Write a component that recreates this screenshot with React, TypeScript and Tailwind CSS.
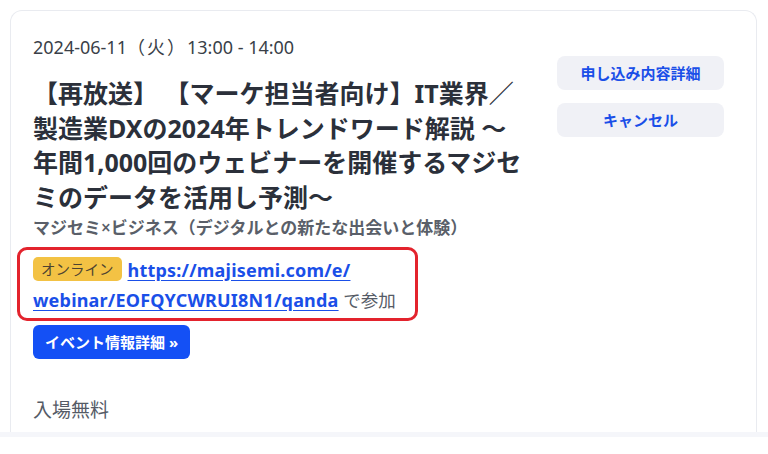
import React from "react";

export default function App() {
  return (
    <div
      className="w-[768px] h-[454px] bg-white overflow-hidden"
      style={{ fontFamily: '"Noto Sans", "Noto Sans CJK JP", sans-serif' }}
    >
      <div className="pt-[10px] pl-[10px]">
        <div className="w-[747px] h-[422px] border border-b-0 border-[#e9ebf0] rounded-t-[12px] pl-[22px] pr-[32px] pt-[23px] flex gap-[24px]">
          <div className="w-[500px] flex flex-col">
            <div className="text-[18px] leading-[26px] text-[#3a3f48] whitespace-nowrap">
              2024-06-11<span className="tracking-[2px]">（火）</span>13:00 - 14:00
            </div>
            <h1 className="mt-[16px] text-[25px] leading-[34.5px] font-bold text-[#2b303a] whitespace-nowrap">
              【再放送】 【マーケ担当者向け】IT業界／
              <br />
              製造業DXの2024年トレンドワード解説 〜
              <br />
              年間1,000回のウェビナーを開催するマジセ
              <br />
              ミのデータを活用し予測〜
            </h1>
            <div className="mt-[2px] text-[17px] leading-[24px] font-semibold text-[#5a5f69] whitespace-nowrap">
              マジセミ×ビジネス（デジタルとの新たな出会いと体験）
            </div>
            <div className="mt-[7px] -ml-[16px] w-[401px] border-[3px] border-[#e3232d] rounded-[10px] pl-[13px] pt-[5px] pb-[3px] text-[18px] leading-[30px]">
              <span className="inline-block align-[2px] bg-[#f3c244] text-[#4d4231] text-[14.5px] leading-[24px] px-[8px] rounded-[5px] mr-[6px]">
                オンライン
              </span>
              <a href="#" className="font-bold text-[#1a4fe8] underline underline-offset-[3px] tracking-[0.2px]">
                https://majisemi.com/e/
                <br />
                webinar/EOFQYCWRUI8N1/qanda
              </a>
              <span className="text-[#555b66] text-[17.5px]"> で参加</span>
            </div>
            <div className="mt-[4px]">
              <button className="h-[34px] px-[12px] bg-[#1450f5] text-white font-bold text-[15px] rounded-[6px]">
                イベント情報詳細 »
              </button>
            </div>
            <div className="mt-[38px] text-[19px] leading-[26px] text-[#555b66]">入場無料</div>
          </div>
          <div className="w-[167px] pt-[22px] flex flex-col gap-[13px]">
            <button className="h-[34px] bg-[#f0f1f6] text-[#1a4fe8] font-bold text-[15px] rounded-[8px]">
              申し込み内容詳細
            </button>
            <button className="h-[34px] bg-[#f0f1f6] text-[#1a4fe8] font-bold text-[15px] rounded-[8px]">
              キャンセル
            </button>
          </div>
        </div>
      </div>
      <div className="h-[5px] bg-[#f5f6fa]" />
    </div>
  );
}
